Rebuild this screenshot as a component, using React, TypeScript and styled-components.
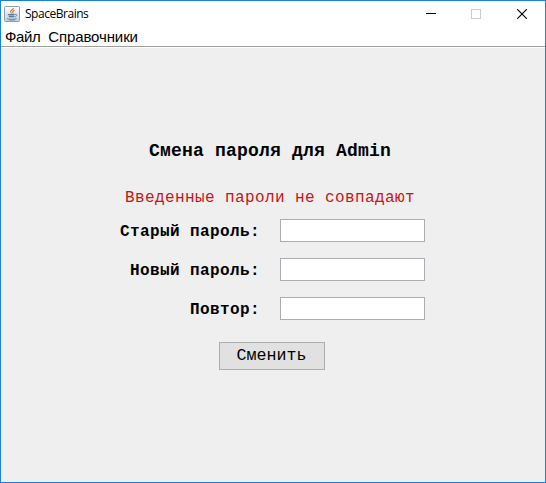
import React from "react";
import styled, { createGlobalStyle } from "styled-components";

const GlobalStyle = createGlobalStyle`
  * { box-sizing: border-box; }
  body { margin: 0; background: #fff; overflow: hidden; }
`;

const Window = styled.div`
  display: flex;
  flex-direction: column;
  width: 546px;
  height: 483px;
  border: 1px solid #1883d7;
  background: #efefef;
  color: #000;
`;

const TitleBar = styled.header`
  display: flex;
  align-items: center;
  height: 25px;
  flex: none;
  padding-left: 3px;
  background: #fff;
`;

const Title = styled.span`
  flex: 1;
  margin-left: 5px;
  font: 12px/24px "Open Sans", "Noto Sans", sans-serif;
  letter-spacing: -0.47px;
`;

const WindowButton = styled.button`
  display: flex;
  align-items: center;
  justify-content: center;
  width: 46px;
  height: 25px;
  padding: 0;
  border: 0;
  background: none;

  &:first-of-type { width: 45px; }
`;

const MenuBar = styled.nav`
  display: flex;
  flex: none;
  gap: 8px;
  height: 21px;
  padding-left: 4px;
  background: #fff;
  border-bottom: 1px solid #a0a0a0;
`;

const MenuItem = styled.span`
  font: 15px/21px "Liberation Sans", Arial, sans-serif;
  letter-spacing: -0.12px;

  &:first-child { letter-spacing: -0.4px; }
`;

const Form = styled.form`
  display: flex;
  flex: 1;
  flex-direction: column;
  align-items: center;
  border-top: 1px solid #fff;
  padding: 92px 1px 0 0;
  font-family: "Liberation Mono", "Courier New", monospace;
`;

const Heading = styled.h1`
  margin: 0;
  padding-right: 5px;
  font-size: 18px;
  line-height: 22px;
  font-weight: 700;
  letter-spacing: 0.2px;
`;

const ErrorText = styled.p`
  margin: 27px 5px 12px 0;
  font-size: 16px;
  line-height: 18px;
  letter-spacing: 0.4px;
  color: #c81414;
`;

const Fields = styled.div`
  display: grid;
  grid-template-columns: 140px 145px;
  column-gap: 20px;
  row-gap: 16px;
`;

const Label = styled.label`
  font-size: 16px;
  line-height: 27px;
  height: 23px;
  font-weight: 700;
  letter-spacing: 0.4px;
  text-align: right;
  white-space: nowrap;
`;

const Input = styled.input`
  width: 145px;
  height: 23px;
  padding: 2px 4px;
  border: 1px solid #abadb3;
  border-radius: 0;
  background: #fff;
`;

const Submit = styled.button`
  width: 106px;
  height: 28px;
  margin: 22px 2px 0 0;
  padding: 0;
  border: 1px solid #adadad;
  background: #e1e1e1;
  color: #000;
  font: 16.67px/26px "Liberation Mono", "Courier New", monospace;
`;

const JavaIcon = () => (
  <svg width="16" height="16" viewBox="0 0 16 16" fill="none">
    <defs>
      <linearGradient id="tile" x1="0" y1="0" x2="0" y2="1">
        <stop offset="0" stopColor="#fff" />
        <stop offset="1" stopColor="#c4ced6" />
      </linearGradient>
    </defs>
    <rect x="0.5" y="0.5" width="15" height="15" rx="1" fill="url(#tile)" stroke="#8c9dab" />
    <path d="M9.7 2.2C9 3.4 6.4 4.1 6.6 5.7c.1.7.8 1 .9 1.9M10.7 4.2C9 4.8 8 5.6 8.8 6.4c.4.4.2.9-.1 1.3" stroke="#ee7d24" strokeWidth="1.2" />
    <path d="M3.8 8.6h6.8M4.8 10.5h5.2" stroke="#4b7da6" strokeWidth="1.3" />
    <path d="M11 8.3c2.6-.4 2.2 2.3-.5 2.5M3 12.6c2 1 7.5 1 9.6-.1M5 13.8c2 .3 4.5.3 6.2-.1" stroke="#5f8aad" />
  </svg>
);

const fields = ["Старый пароль:", "Новый пароль:", "Повтор:"];

export default function App() {
  return (
    <>
      <GlobalStyle />
      <Window>
        <TitleBar>
          <JavaIcon />
          <Title>SpaceBrains</Title>
          <WindowButton type="button" aria-label="Свернуть">
            <svg width="10" height="11" shapeRendering="crispEdges"><path d="M0 5.5h10" stroke="#000" /></svg>
          </WindowButton>
          <WindowButton type="button" aria-label="Развернуть" disabled>
            <svg width="10" height="10" shapeRendering="crispEdges"><rect x=".5" y=".5" width="9" height="9" fill="none" stroke="#ccc" /></svg>
          </WindowButton>
          <WindowButton type="button" aria-label="Закрыть">
            <svg width="10" height="10"><path d="M.2.2l9.6 9.6M9.8.2L.2 9.8" stroke="#000" strokeWidth="1.1" /></svg>
          </WindowButton>
        </TitleBar>
        <MenuBar>
          <MenuItem>Файл</MenuItem>
          <MenuItem>Справочники</MenuItem>
        </MenuBar>
        <Form onSubmit={(e) => e.preventDefault()}>
          <Heading>Смена пароля для Admin</Heading>
          <ErrorText>Введенные пароли не совпадают</ErrorText>
          <Fields>
            {fields.map((label, i) => (
              <React.Fragment key={label}>
                <Label htmlFor={`password-${i}`}>{label}</Label>
                <Input id={`password-${i}`} type="password" />
              </React.Fragment>
            ))}
          </Fields>
          <Submit type="submit">Сменить</Submit>
        </Form>
      </Window>
    </>
  );
}
